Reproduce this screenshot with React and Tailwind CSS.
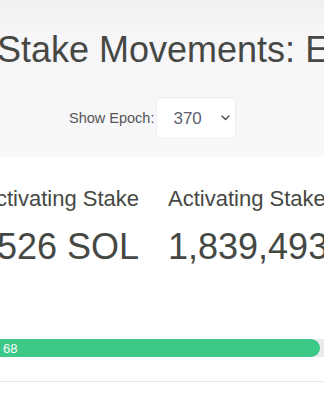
import React from "react";

export default function App() {
  return (
    <div className="w-[324px] h-[400px] overflow-hidden bg-white font-['Liberation_Sans',Arial,sans-serif]">
      <div className="h-[157px] pt-[32px] bg-[linear-gradient(to_bottom,#efeef1_0px,#f6f5f8_30px,#f8f8fb_157px)]">
        <h1 className="ml-[-3px] whitespace-nowrap text-[36px] leading-[36px] font-normal text-[#464844]">
          Stake Movements: Epoch 370
        </h1>
        <div className="mt-[29px] flex items-center pl-[69px]">
          <span className="text-[14.5px] leading-none text-[#555555] whitespace-nowrap">Show Epoch:</span>
          <div className="ml-[2px] flex h-[42px] w-[80px] items-center rounded-[5px] border border-[#ececf0] bg-white pl-[16px] pr-[5px]">
            <span className="text-[17px] leading-none text-[#5f6270]">370</span>
            <svg className="ml-auto" width="9" height="6" viewBox="0 0 9 6" fill="none">
              <path d="M1 1l3.5 3.5L8 1" stroke="#555" strokeWidth="1.5" strokeLinecap="round" strokeLinejoin="round" />
            </svg>
          </div>
        </div>
      </div>
      <div className="flex pt-[31px] text-[#464844]">
        <div className="flex w-[139px] shrink-0 flex-col items-end">
          <div className="whitespace-nowrap text-[22px] leading-[22px]">Activating Stake</div>
          <div className="mt-[19px] whitespace-nowrap text-[36px] leading-[36px]">1,172,526 SOL</div>
        </div>
        <div className="ml-[29px] flex flex-col items-start">
          <div className="whitespace-nowrap text-[22px] leading-[22px]">Activating Stake</div>
          <div className="mt-[19px] whitespace-nowrap text-[36px] leading-[36px]">1,839,493 SOL</div>
        </div>
      </div>
      <div className="mt-[74px] flex h-[18px] bg-[#e9ecef]">
        <div className="flex h-[18px] w-[320px] items-center rounded-r-full bg-[#3cc886] pl-[3px]">
          <span className="text-[13px] leading-none text-white">68</span>
        </div>
      </div>
      <div className="mt-[24px] h-px bg-[#e6e6e8]" />
    </div>
  );
}
